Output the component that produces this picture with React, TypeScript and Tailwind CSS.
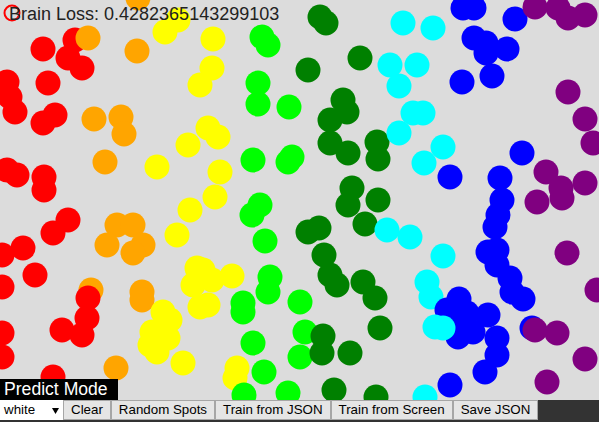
const COLORS: Record<string, string> = {
  R: "#ff0000",
  O: "#ffa500",
  Y: "#ffff00",
  L: "#00ff00",
  G: "#008000",
  C: "#00ffff",
  B: "#0000ff",
  P: "#800080",
};

// x,y pairs per colour, drawn in this order
const groups: [string, number[][]][] = [
  ["O", [[91, 290]]],
  [
    "R",
    [
      [43, 49], [75, 40], [68, 58], [82, 68], [7, 82], [48, 83], [10, 97], [15, 112],
      [55, 115], [43, 123], [7, 170], [17, 175], [44, 177], [44, 190], [68, 220],
      [53, 233], [23, 248], [2, 255], [35, 275], [2, 287], [88, 298], [87, 318],
      [62, 330], [82, 335], [2, 333], [2, 357], [53, 377],
    ],
  ],
  [
    "O",
    [
      [88, 38], [137, 51], [138, -2], [94, 119], [121, 117], [124, 134], [105, 162],
      [117, 225], [133, 225], [107, 245], [143, 245], [133, 253], [142, 292],
      [142, 300], [116, 368],
    ],
  ],
  [
    "Y",
    [
      [165, 32], [178, 20], [213, 39], [212, 68], [200, 85], [208, 128], [218, 137],
      [188, 145], [157, 167], [220, 172], [215, 197], [190, 210], [177, 235],
      [197, 268], [193, 285], [203, 270], [212, 280], [232, 276], [208, 305],
      [200, 307], [163, 312], [170, 320], [152, 332], [168, 338], [150, 345],
      [157, 352], [183, 363], [237, 368], [235, 378],
    ],
  ],
  [
    "L",
    [
      [262, 37], [268, 45], [258, 83], [258, 104], [289, 107], [253, 160], [292, 157],
      [288, 162], [260, 205], [252, 215], [265, 241], [270, 277], [268, 292],
      [243, 303], [243, 312], [300, 302], [305, 332], [253, 343], [300, 357],
      [264, 372], [244, 395], [288, 393],
    ],
  ],
  [
    "G",
    [
      [320, 17], [326, 23], [360, 58], [308, 70], [343, 100], [347, 112], [330, 120],
      [330, 143], [348, 153], [377, 142], [378, 159], [352, 188], [348, 205],
      [378, 200], [308, 232], [319, 228], [365, 224], [324, 255], [330, 275],
      [337, 285], [363, 282], [375, 298], [380, 328], [323, 336], [322, 353],
      [350, 353], [334, 390], [376, 397],
    ],
  ],
  [
    "C",
    [
      [403, 23], [433, 28], [390, 65], [417, 65], [399, 86], [413, 113], [423, 113],
      [399, 133], [443, 147], [424, 163], [387, 230], [410, 237], [443, 256],
      [427, 282], [431, 297], [425, 397],
    ],
  ],
  [
    "B",
    [
      [463, 8], [474, 8], [515, 19], [474, 38], [486, 43], [486, 53], [507, 49],
      [462, 82], [492, 76], [522, 153], [450, 177], [500, 178], [502, 200],
      [498, 215], [495, 227], [488, 252], [497, 250], [497, 265], [510, 278],
      [512, 292], [523, 299], [459, 299], [447, 310], [467, 313], [488, 315],
      [463, 327], [473, 332], [458, 337], [497, 338], [497, 355], [485, 372],
      [450, 385], [532, 328],
    ],
  ],
  ["C", [[435, 327], [443, 328]]],
  [
    "P",
    [
      [535, 7], [558, 8], [568, 18], [585, 15], [568, 92], [585, 119], [593, 143],
      [546, 172], [561, 188], [585, 183], [537, 202], [562, 198], [567, 253],
      [597, 290], [535, 330], [557, 333], [585, 359], [547, 382],
    ],
  ],
];

const buttons = ["Clear", "Random Spots", "Train from JSON", "Train from Screen", "Save JSON"];

function Board() {
  return (
    <div className="relative h-[400px] w-[599px] bg-[#dcdcdc]">
      <svg width={599} height={400} className="block">
        {groups.map(([c, pts], gi) =>
          pts.map(([x, y], i) => (
            <circle key={`${gi}-${i}`} cx={x} cy={y} r={12.5} fill={COLORS[c]} />
          ))
        )}
        <circle cx={12} cy={13} r={7.5} fill="none" stroke="#ff0000" strokeWidth={2} />
        <text
          x={9}
          y={20}
          fontFamily="'Liberation Sans', Arial, sans-serif"
          fontSize={18}
          fill="#222"
        >
          Brain Loss: 0.4282365143299103
        </text>
      </svg>
      {/* mode label sits over the canvas corner */}
      <div className="absolute bottom-0 left-0 h-[21px] w-[118px] bg-black pl-[4px] text-[17.6px] leading-[21px] text-white">
        Predict Mode
      </div>
    </div>
  );
}

export default function App() {
  return (
    <div className="w-[599px] font-['Liberation_Sans',Arial,sans-serif]">
      <Board />
      <div className="flex h-[22px] items-start bg-[#333]">
        <div className="relative h-[20px] w-[63px] bg-white pl-[4px] text-[13.33px] leading-[20px] text-black">
          white
          <svg width={7} height={6} className="absolute left-[52px] top-[8px]">
            <polygon points="0,0 7,0 3.5,6" fill="#000" />
          </svg>
        </div>
        {buttons.map((b) => (
          <button
            key={b}
            className="h-[20px] border border-[#a6a6a6] bg-[#e5e5e5] px-[7px] text-[13.33px] leading-[18px] text-black"
          >
            {b}
          </button>
        ))}
      </div>
    </div>
  );
}
